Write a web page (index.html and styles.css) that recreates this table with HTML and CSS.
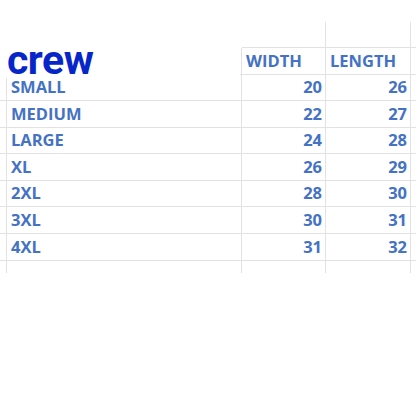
FILE: index.html
```html
<!DOCTYPE html>
<html>
<head>
<meta charset="utf-8">
<link rel="stylesheet" href="styles.css">
</head>
<body>
<div class="page">
  <div class="sheet">
    <div class="row top">
      <div class="c pad"></div><div class="c name"></div><div class="c num"></div><div class="c num"></div><div class="c tail"></div>
    </div>
    <div class="row h27">
      <div class="c pad"></div><div class="c name"></div><div class="c num head">WIDTH</div><div class="c num head">LENGTH</div><div class="c tail"></div>
    </div>
    <div class="row h26">
      <div class="c pad"></div><div class="c name">SMALL</div><div class="c num">20</div><div class="c num">26</div><div class="c tail"></div>
    </div>
    <div class="row h27">
      <div class="c pad"></div><div class="c name">MEDIUM</div><div class="c num">22</div><div class="c num">27</div><div class="c tail"></div>
    </div>
    <div class="row h26">
      <div class="c pad"></div><div class="c name">LARGE</div><div class="c num">24</div><div class="c num">28</div><div class="c tail"></div>
    </div>
    <div class="row h27">
      <div class="c pad"></div><div class="c name">XL</div><div class="c num">26</div><div class="c num">29</div><div class="c tail"></div>
    </div>
    <div class="row h26">
      <div class="c pad"></div><div class="c name">2XL</div><div class="c num">28</div><div class="c num">30</div><div class="c tail"></div>
    </div>
    <div class="row h27">
      <div class="c pad"></div><div class="c name">3XL</div><div class="c num">30</div><div class="c num">31</div><div class="c tail"></div>
    </div>
    <div class="row h27">
      <div class="c pad"></div><div class="c name">4XL</div><div class="c num">31</div><div class="c num">32</div><div class="c tail"></div>
    </div>
    <div class="row last">
      <div class="c pad"></div><div class="c name"></div><div class="c num"></div><div class="c num"></div><div class="c tail"></div>
    </div>
  </div>
  <div class="logo"><span class="logo-text">crew</span></div>
</div>
</body>
</html>
```
FILE: styles.css
```css
html, body {
  margin: 0;
  padding: 0;
  background: #ffffff;
}
.page {
  position: relative;
  width: 416px;
  height: 416px;
  overflow: hidden;
  padding-top: 22px;
  box-sizing: border-box;
}
.sheet {
  display: flex;
  flex-direction: column;
  font-family: "Open Sans", "Liberation Sans", sans-serif;
  font-weight: 700;
  font-size: 16.5px;
  color: #4472c4;
}
.row {
  display: grid;
  grid-template-columns: 7px 235px 84px 85px 5px;
  border-bottom: 1px solid #e2e2e2;
  box-sizing: border-box;
}
.row.top {
  height: 26px;
  border-bottom: none;
}
.row.top .c.num,
.row.top .c.tail {
  border-bottom: 1px solid #e2e2e2;
}
.row.top .c.pad,
.row.top .c.name {
  border-right-color: transparent;
}
.row.h27 { height: 27px; }
.row.h26 { height: 26px; }
.row.last {
  height: 12px;
  border-bottom: none;
}
.c {
  box-sizing: border-box;
  border-right: 1px solid #e2e2e2;
  display: flex;
  align-items: center;
  line-height: 1;
  white-space: nowrap;
}
.c.tail {
  border-right: none;
}
.c.name {
  padding-left: 4px;
}
.c.num {
  justify-content: flex-end;
  padding-right: 3px;
}
.c.num.head {
  justify-content: flex-start;
  padding-left: 4px;
  padding-right: 0;
}
.logo {
  position: absolute;
  left: 0;
  top: 40px;
  width: 240px;
  height: 38px;
  background: #ffffff;
}
.logo-text {
  position: absolute;
  left: 7px;
  top: 7px;
  font-family: Roboto, "Liberation Sans", sans-serif;
  font-weight: 700;
  font-size: 41px;
  letter-spacing: -0.5px;
  line-height: 26px;
  height: 26px;
  color: #0626c9;
}
```
